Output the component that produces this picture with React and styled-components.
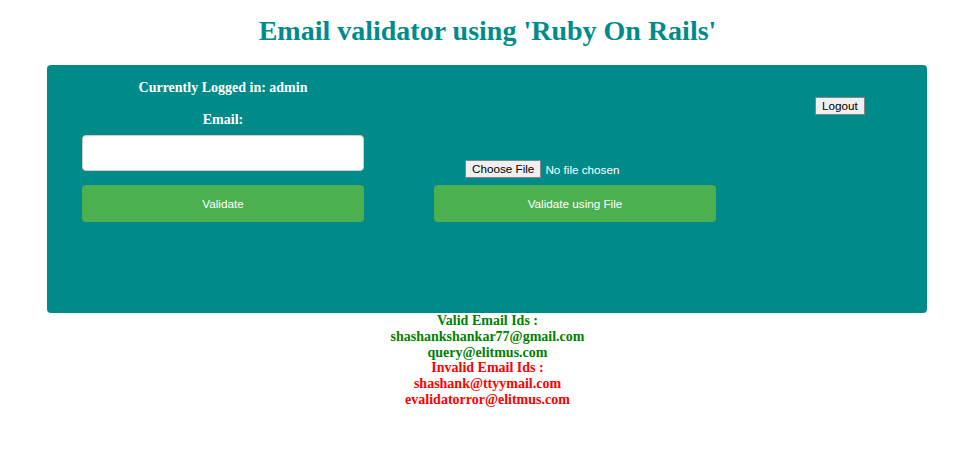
import styled, { createGlobalStyle } from "styled-components"

const GlobalStyle = createGlobalStyle`
  body {
    margin: 0;
    background: #ffffff;
    font-family: "Liberation Serif", "Times New Roman", serif;
  }
`

export default function App() {
  const valid = ["shashankshankar77@gmail.com", "query@elitmus.com"]
  const invalid = ["shashank@ttyymail.com", "evalidatorror@elitmus.com"]

  return (
    <>
      <GlobalStyle />
      <Title>Email validator using 'Ruby On Rails'</Title>

      <Panel>
        <LeftColumn>
          <Heading>Currently Logged in: admin</Heading>
          <Label htmlFor="email">Email:</Label>
          <EmailInput id="email" type="text" />
          <ValidateButton>Validate</ValidateButton>
        </LeftColumn>

        <RightColumn>
          <FileRow>
            <SmallButton>Choose File</SmallButton>
            <FileText>No file chosen</FileText>
          </FileRow>
          <ValidateButton>Validate using File</ValidateButton>
        </RightColumn>

        <LogoutColumn>
          <SmallButton>Logout</SmallButton>
        </LogoutColumn>
      </Panel>

      <Results>
        <ResultLine $tone="valid">Valid Email Ids :</ResultLine>
        {valid.map((mail) => (
          <ResultLine key={mail} $tone="valid">{mail}</ResultLine>
        ))}
        <ResultLine $tone="invalid">Invalid Email Ids :</ResultLine>
        {invalid.map((mail) => (
          <ResultLine key={mail} $tone="invalid">{mail}</ResultLine>
        ))}
      </Results>
    </>
  )
}

const Title = styled.h1`
  margin: 0 0 18px 0;
  padding-top: 15px;
  font-size: 28px;
  line-height: 32px;
  font-weight: bold;
  text-align: center;
  color: #008b8b;
`

const Panel = styled.div`
  box-sizing: border-box;
  width: 880px;
  height: 248px;
  margin-left: 47px;
  padding: 15px 0 0 35px;
  background-color: #008b8a;
  border-radius: 4px;
  display: flex;
  align-items: flex-start;
`

const LeftColumn = styled.div`
  width: 282px;
  display: flex;
  flex-direction: column;
  align-items: center;
`

const Heading = styled.div`
  font-size: 14px;
  line-height: 16px;
  font-weight: bold;
  color: #ffffff;
  margin-bottom: 16px;
`

const Label = styled.label`
  font-size: 14px;
  line-height: 16px;
  font-weight: bold;
  color: #ffffff;
  margin-bottom: 7px;
`

const EmailInput = styled.input`
  box-sizing: border-box;
  width: 100%;
  height: 36px;
  border: 1px solid #cccccc;
  border-radius: 4px;
  background: #ffffff;
  margin: 0 0 14px 0;
  padding: 0 10px;
`

const ValidateButton = styled.button`
  box-sizing: border-box;
  width: 282px;
  height: 37px;
  border: none;
  border-radius: 4px;
  background-color: #4caf50;
  color: #ffffff;
  font-family: "Liberation Sans", Arial, sans-serif;
  font-size: 11.7px;
  cursor: pointer;
`

const RightColumn = styled.div`
  margin-left: 70px;
  height: 142px;
  display: flex;
  flex-direction: column;
  justify-content: flex-end;
  gap: 7px;
`

const FileRow = styled.div`
  display: flex;
  align-items: center;
  gap: 4px;
  padding-left: 31px;
`

const SmallButton = styled.button`
  box-sizing: border-box;
  height: 18px;
  padding: 0 6px;
  background: #efefef;
  border: 1px solid #858585;
  border-radius: 0;
  color: #000000;
  font-family: "Liberation Sans", Arial, sans-serif;
  font-size: 11.7px;
  line-height: 16px;
`

const FileText = styled.span`
  color: #ffffff;
  font-family: "Liberation Sans", Arial, sans-serif;
  font-size: 11.7px;
`

const LogoutColumn = styled.div`
  margin-left: 99px;
  padding-top: 16px;
`

const Results = styled.div`
  display: flex;
  flex-direction: column;
  align-items: center;
`

const ResultLine = styled.div`
  font-size: 14px;
  line-height: 15.8px;
  font-weight: bold;
  color: ${(p) => (p.$tone === "valid" ? "#008000" : "#ff0000")};
`
